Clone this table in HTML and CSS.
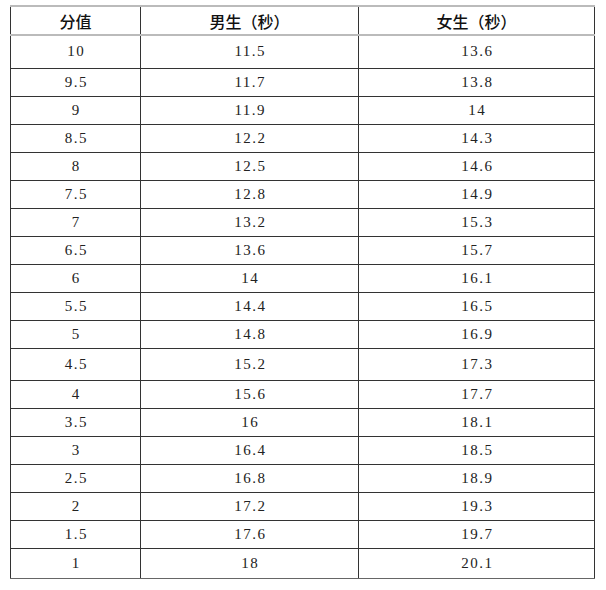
FILE: index.html
```html
<!DOCTYPE html>
<html lang="zh">
<head>
<meta charset="utf-8">
<link rel="stylesheet" href="styles.css">
</head>
<body>
<div class="wrap">
<table class="score">
<colgroup><col class="c1"><col class="c2"><col class="c3"></colgroup>
<thead>
<tr class="head"><th>分值</th><th>男生（秒）</th><th>女生（秒）</th></tr>
</thead>
<tbody>
<tr class="r33"><td>10</td><td>11.5</td><td>13.6</td></tr>
<tr><td>9.5</td><td>11.7</td><td>13.8</td></tr>
<tr><td>9</td><td>11.9</td><td>14</td></tr>
<tr><td>8.5</td><td>12.2</td><td>14.3</td></tr>
<tr><td>8</td><td>12.5</td><td>14.6</td></tr>
<tr><td>7.5</td><td>12.8</td><td>14.9</td></tr>
<tr><td>7</td><td>13.2</td><td>15.3</td></tr>
<tr><td>6.5</td><td>13.6</td><td>15.7</td></tr>
<tr><td>6</td><td>14</td><td>16.1</td></tr>
<tr><td>5.5</td><td>14.4</td><td>16.5</td></tr>
<tr class="soft"><td>5</td><td>14.8</td><td>16.9</td></tr>
<tr class="soft r32"><td>4.5</td><td>15.2</td><td>17.3</td></tr>
<tr><td>4</td><td>15.6</td><td>17.7</td></tr>
<tr><td>3.5</td><td>16</td><td>18.1</td></tr>
<tr><td>3</td><td>16.4</td><td>18.5</td></tr>
<tr><td>2.5</td><td>16.8</td><td>18.9</td></tr>
<tr><td>2</td><td>17.2</td><td>19.3</td></tr>
<tr><td>1.5</td><td>17.6</td><td>19.7</td></tr>
<tr class="r30 last"><td>1</td><td>18</td><td>20.1</td></tr>
</tbody>
</table>
</div>
</body>
</html>
```
FILE: styles.css
```css
html, body {
  margin: 0;
  padding: 0;
  background: #fff;
}
.wrap {
  padding: 5px 0 0 10px;
}
.score {
  border-collapse: collapse;
  table-layout: fixed;
  width: 584px;
  color: #222;
}
.c1 { width: 130px; }
.c2 { width: 218px; }
.c3 { width: 236px; }
.score th, .score td {
  border: 1px solid #333;
  padding: 0;
  text-align: center;
  vertical-align: middle;
}
.score th {
  font-family: "Noto Sans CJK SC", "Noto Sans", sans-serif;
  font-weight: 500;
  font-size: 16px;
  color: #111;
  border-top: 2px solid #bbb;
  border-bottom: 2px solid #bbb;
}
.score td {
  font-family: "Liberation Serif", "Noto Sans CJK SC", serif;
  font-size: 15px;
  letter-spacing: 1.5px;
  text-indent: 1.5px;
}
.head { height: 29px; }
.score tbody tr { height: 28px; }
.score tbody tr.r33 { height: 33px; }
.score tbody tr.r32 { height: 32px; }
.score tbody tr.r30 { height: 30px; }
.soft td { border-top-color: #777; }
.last td { border-bottom-color: #666; }
```
